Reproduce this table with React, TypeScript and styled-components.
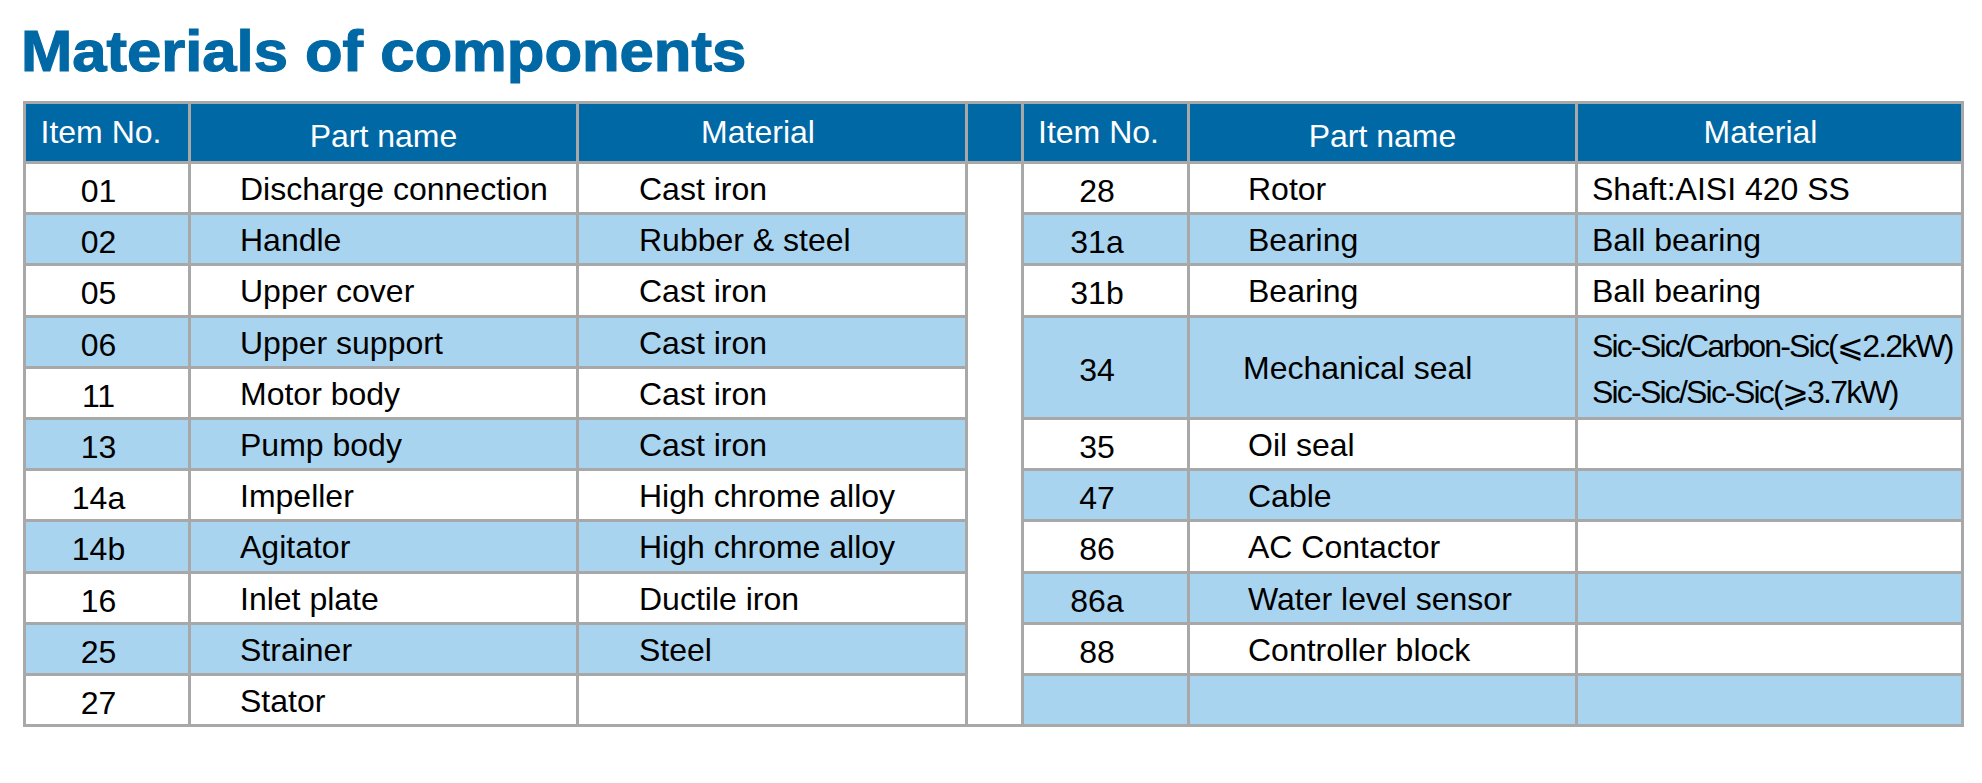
import React from 'react';
import styled, { createGlobalStyle } from 'styled-components';

const GlobalStyle = createGlobalStyle`
  body {
    margin: 0;
    background: #ffffff;
    font-family: "Liberation Sans", Arial, sans-serif;
  }
`;

type Shade = 'white' | 'blue';

interface RightRow {
  no: string;
  name: string;
  material: string[];
  span?: number;
  nameShift?: number;
}

const leftRows: [string, string, string][] = [
  ['01', 'Discharge connection', 'Cast iron'],
  ['02', 'Handle', 'Rubber & steel'],
  ['05', 'Upper cover', 'Cast iron'],
  ['06', 'Upper support', 'Cast iron'],
  ['11', 'Motor body', 'Cast iron'],
  ['13', 'Pump body', 'Cast iron'],
  ['14a', 'Impeller', 'High chrome alloy'],
  ['14b', 'Agitator', 'High chrome alloy'],
  ['16', 'Inlet plate', 'Ductile iron'],
  ['25', 'Strainer', 'Steel'],
  ['27', 'Stator', ''],
];

// null marks a row already covered by the rowspan above it
const rightRows: (RightRow | null)[] = [
  { no: '28', name: 'Rotor', material: ['Shaft:AISI 420 SS'] },
  { no: '31a', name: 'Bearing', material: ['Ball bearing'] },
  { no: '31b', name: 'Bearing', material: ['Ball bearing'] },
  {
    no: '34',
    name: 'Mechanical seal',
    material: ['Sic-Sic/Carbon-Sic(⩽2.2kW)', 'Sic-Sic/Sic-Sic(⩾3.7kW)'],
    span: 2,
    nameShift: -5,
  },
  null,
  { no: '35', name: 'Oil seal', material: [] },
  { no: '47', name: 'Cable', material: [] },
  { no: '86', name: 'AC Contactor', material: [] },
  { no: '86a', name: 'Water level sensor', material: [] },
  { no: '88', name: 'Controller block', material: [] },
  { no: '', name: '', material: [] },
];

export default function App() {
  let entry = -1;

  return (
    <>
      <GlobalStyle />
      <Page>
        <Title>Materials of components</Title>
        <Table>
          <colgroup>
            <col style={{ width: 165 }} />
            <col style={{ width: 388 }} />
            <col style={{ width: 389 }} />
            <col style={{ width: 56 }} />
            <col style={{ width: 166 }} />
            <col style={{ width: 388 }} />
            <col style={{ width: 386 }} />
          </colgroup>
          <thead>
            <tr>
              <Head $right={12}>Item No.</Head>
              <Head $low>Part name</Head>
              <Head $right={28}>Material</Head>
              <Head />
              <Head $right={14}>Item No.</Head>
              <Head $low>Part name</Head>
              <Head $right={18}>Material</Head>
            </tr>
          </thead>
          <tbody>
            {leftRows.map(([no, name, material], i) => {
              const leftShade: Shade = i % 2 === 0 ? 'white' : 'blue';
              const right = rightRows[i];
              if (right) entry += 1;
              const rightShade: Shade = entry % 2 === 0 ? 'white' : 'blue';

              return (
                <tr key={no}>
                  <NumberCell $shade={leftShade}>{no}</NumberCell>
                  <TextCell $shade={leftShade} $pad={49}>{name}</TextCell>
                  <TextCell $shade={leftShade} $pad={60}>{material}</TextCell>
                  {i === 0 && <GapCell rowSpan={leftRows.length} />}
                  {right && (
                    <>
                      <NumberCell $shade={rightShade} rowSpan={right.span}>
                        {right.no}
                      </NumberCell>
                      <TextCell
                        $shade={rightShade}
                        $pad={58 + (right.nameShift ?? 0)}
                        rowSpan={right.span}
                      >
                        {right.name}
                      </TextCell>
                      <TextCell $shade={rightShade} $pad={14} rowSpan={right.span}>
                        {right.material.length > 1 ? (
                          <SealLines>
                            {right.material.map((line) => (
                              <div key={line}>{line}</div>
                            ))}
                          </SealLines>
                        ) : (
                          right.material[0]
                        )}
                      </TextCell>
                    </>
                  )}
                </tr>
              );
            })}
          </tbody>
        </Table>
      </Page>
    </>
  );
}

const Page = styled.div`
  width: 1982px;
  height: 783px;
  padding: 23px 0 0 23px;
  box-sizing: border-box;
  overflow: hidden;
`;

const Title = styled.h1`
  margin: 0 0 22px -2px;
  font-size: 57px;
  line-height: 56px;
  font-weight: 700;
  color: #0068a5;
  white-space: nowrap;
  -webkit-text-stroke: 1.2px #0068a5;
  transform: scaleX(1.08);
  transform-origin: left center;
`;

const Table = styled.table`
  border-collapse: collapse;
  table-layout: fixed;
  width: 1938px;
  font-size: 32px;
  color: #000000;
`;

const Head = styled.th<{ $low?: boolean; $right?: number }>`
  height: ${(p) => (p.$low ? 50 : 57)}px;
  padding: ${(p) => (p.$low ? '7px' : '0')} ${(p) => p.$right ?? 0}px 0 0;
  background: #0068a5;
  color: #ffffff;
  font-weight: 400;
  text-align: center;
  white-space: nowrap;
  border: 3px solid #a8a8a8;
`;

const Cell = styled.td<{ $shade: Shade }>`
  height: 45.2px;
  padding: 3px 0 0;
  background: ${(p) => (p.$shade === 'blue' ? '#a9d4ef' : '#ffffff')};
  border: 3px solid #a8a8a8;
  white-space: nowrap;
`;

const NumberCell = styled(Cell)`
  height: 41.2px;
  padding: 7px 17px 0 0;
  text-align: center;
`;

const TextCell = styled(Cell)<{ $pad: number }>`
  padding-left: ${(p) => p.$pad}px;
  text-align: left;
`;

const GapCell = styled.td`
  padding: 0;
  background: #ffffff;
  border: 3px solid #a8a8a8;
`;

const SealLines = styled.div`
  line-height: 46px;
  letter-spacing: -1.8px;
`;
